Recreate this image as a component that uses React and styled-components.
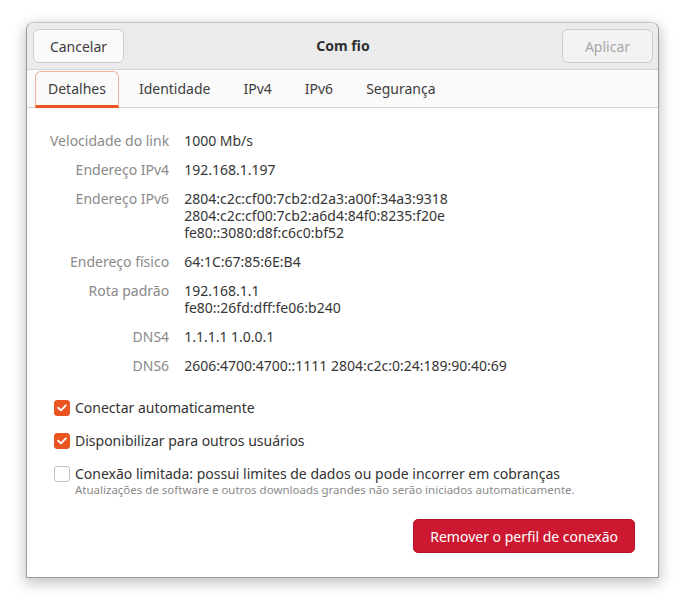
import React from 'react'
import styled, { createGlobalStyle } from 'styled-components'

const Global = createGlobalStyle`
  html, body {
    margin: 0;
    background: #ffffff;
  }
  body {
    font-family: "Noto Sans", "DejaVu Sans", sans-serif;
    font-size: 14px;
    color: #3d3d3d;
  }
`

const Page = styled.div`
  padding: 22px 0 0 26px;
  height: 607px;
  box-sizing: border-box;
`

const Window = styled.div`
  width: 633px;
  height: 556px;
  box-sizing: border-box;
  display: flex;
  flex-direction: column;
  background: #ffffff;
  border: 1px solid #9a9a9a;
  border-top-color: #c4c4c4;
  border-radius: 8px 8px 0 0;
  box-shadow: 0 4px 14px 1px rgba(0, 0, 0, 0.25);
  overflow: hidden;
`

const HeaderBar = styled.div`
  height: 46px;
  flex-shrink: 0;
  display: flex;
  align-items: center;
  justify-content: space-between;
  padding: 0 5px 0 6px;
  background: #ebebeb;
  border-bottom: 1px solid #d3d3d3;
`

const Button = styled.button`
  height: 34px;
  width: 91px;
  font: inherit;
  font-size: 14px;
  color: ${p => (p.disabled ? '#a8a8a8' : '#3d3d3d')};
  background: ${p => (p.disabled ? '#f2f2f2' : '#fafafa')};
  border: 1px solid #cdcdcd;
  border-radius: 6px;
`

const Title = styled.div`
  font-weight: 700;
  font-size: 14px;
  color: #2e2e2e;
  margin-bottom: 1px;
`

const TabBar = styled.div`
  height: 36px;
  flex-shrink: 0;
  display: flex;
  align-items: stretch;
  gap: 7px;
  padding: 1px 4px 0 8px;
  background: #fafafa;
  border-bottom: 1px solid #d3d3d3;
`

const Tab = styled.div`
  display: flex;
  align-items: center;
  padding: 0 12px;
  font-size: 14px;
  color: #3d3d3d;
  border-radius: 6px 6px 0 0;
  border: 1px solid ${p => (p.active ? '#f3b29a' : 'transparent')};
  border-bottom: 3px solid ${p => (p.active ? '#e95420' : 'transparent')};
  margin-bottom: -1px;
`

const Body = styled.div`
  flex: 1;
  display: flex;
  flex-direction: column;
  padding: 24px 23px 24px 23px;
`

const Details = styled.div`
  display: grid;
  grid-template-columns: auto 1fr;
  column-gap: 15px;
  row-gap: 12px;
  line-height: 17px;
`

const Label = styled.div`
  text-align: right;
  color: #8a8a8a;
`

const Value = styled.div`
  color: #363636;
  white-space: pre-line;
`

const Checks = styled.div`
  display: flex;
  flex-direction: column;
  gap: 16px;
  margin-top: 25px;
  padding-left: 4px;
`

const CheckRow = styled.label`
  display: flex;
  align-items: flex-start;
  gap: 5px;
`

const Box = styled.span`
  width: 14px;
  height: 14px;
  margin-top: 1px;
  flex-shrink: 0;
  border-radius: 3px;
  display: flex;
  align-items: center;
  justify-content: center;
  background: ${p => (p.checked ? '#e95420' : '#ffffff')};
  border: 1px solid ${p => (p.checked ? '#e95420' : '#c0c0c0')};
`

const CheckText = styled.div`
  display: flex;
  flex-direction: column;
  line-height: 17px;
  color: #333333;
`

const Hint = styled.span`
  font-size: 11.5px;
  line-height: 12px;
  margin-top: 2px;
  color: #8a8a8a;
`

const Footer = styled.div`
  margin-top: auto;
  display: flex;
  justify-content: flex-end;
`

const DangerButton = styled.button`
  height: 34px;
  padding: 0 16px;
  font: inherit;
  font-size: 14px;
  color: #ffffff;
  background: #cc1931;
  border: 1px solid #b0132a;
  border-radius: 5px;
`

const Tick = () => (
  <svg width="10" height="8" viewBox="0 0 10 8">
    <path d="M1.2 3.8 L4 6.4 L8.8 1.4" fill="none" stroke="#fff" strokeWidth="1.9" strokeLinecap="round" strokeLinejoin="round" />
  </svg>
)

const rows = [
  ['Velocidade do link', '1000 Mb/s'],
  ['Endereço IPv4', '192.168.1.197'],
  ['Endereço IPv6', '2804:c2c:cf00:7cb2:d2a3:a00f:34a3:9318\n2804:c2c:cf00:7cb2:a6d4:84f0:8235:f20e\nfe80::3080:d8f:c6c0:bf52'],
  ['Endereço físico', '64:1C:67:85:6E:B4'],
  ['Rota padrão', '192.168.1.1\nfe80::26fd:dff:fe06:b240'],
  ['DNS4', '1.1.1.1 1.0.0.1'],
  ['DNS6', '2606:4700:4700::1111 2804:c2c:0:24:189:90:40:69'],
]

const tabs = ['Detalhes', 'Identidade', 'IPv4', 'IPv6', 'Segurança']

export default function App() {
  return (
    <Page>
      <Global />
      <Window>
        <HeaderBar>
          <Button>Cancelar</Button>
          <Title>Com fio</Title>
          <Button disabled>Aplicar</Button>
        </HeaderBar>
        <TabBar>
          {tabs.map((t, i) => (
            <Tab key={t} active={i === 0}>{t}</Tab>
          ))}
        </TabBar>
        <Body>
          <Details>
            {rows.map(([l, v]) => (
              <React.Fragment key={l}>
                <Label>{l}</Label>
                <Value>{v}</Value>
              </React.Fragment>
            ))}
          </Details>
          <Checks>
            <CheckRow>
              <Box checked><Tick /></Box>
              <CheckText>Conectar automaticamente</CheckText>
            </CheckRow>
            <CheckRow>
              <Box checked><Tick /></Box>
              <CheckText>Disponibilizar para outros usuários</CheckText>
            </CheckRow>
            <CheckRow>
              <Box />
              <CheckText>
                Conexão limitada: possui limites de dados ou pode incorrer em cobranças
                <Hint>Atualizações de software e outros downloads grandes não serão iniciados automaticamente.</Hint>
              </CheckText>
            </CheckRow>
          </Checks>
          <Footer>
            <DangerButton>Remover o perfil de conexão</DangerButton>
          </Footer>
        </Body>
      </Window>
    </Page>
  )
}
